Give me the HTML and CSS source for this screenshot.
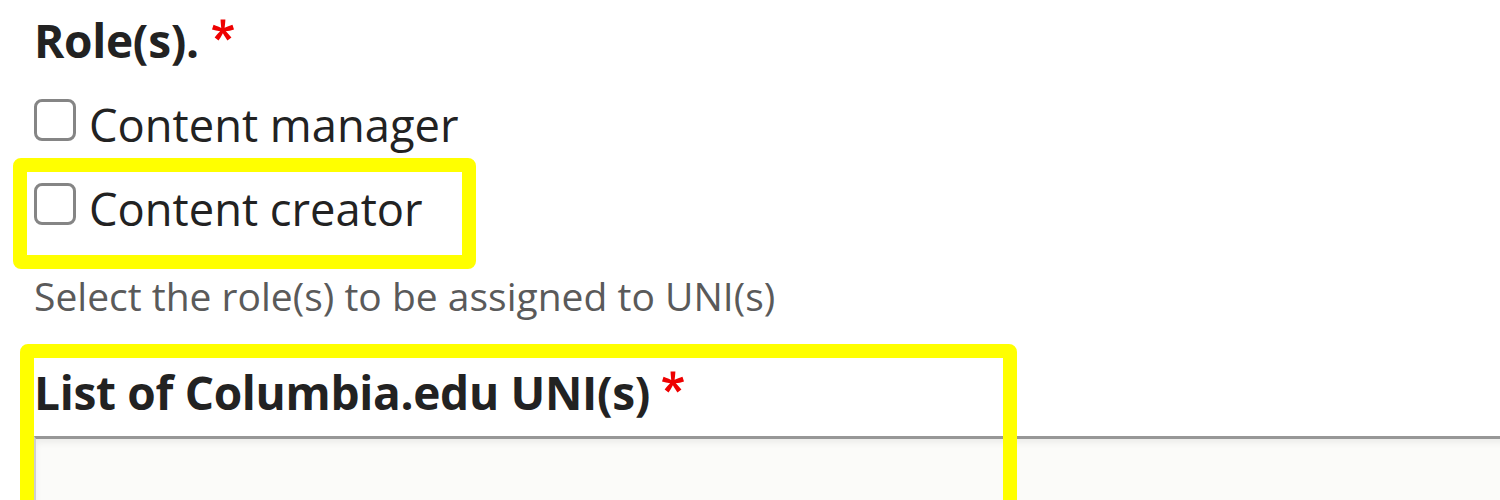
FILE: index.html
```html
<!DOCTYPE html>
<html lang="en">
  <head>
    <meta charset="UTF-8" />
    <title>Add roles</title>
    <link rel="stylesheet" href="styles.css">
  </head>
  <body>
    <form class="user-form">
      <div class="form-item roles">
        <div class="form-label">
          Role(s). <svg class="required" viewBox="0 0 16 16" aria-hidden="true">
            <path d="M0,7.562l1.114-3.438c2.565,0.906,4.43,1.688,5.59,2.35C6.398,3.553,6.237,1.544,6.22,0.447h3.511c-0.05,1.597-0.234,3.6-0.558,6.003c1.664-0.838,3.566-1.613,5.714-2.325L16,7.562c-2.05,0.678-4.06,1.131-6.028,1.356c0.984,0.856,2.372,2.381,4.166,4.575l-2.906,2.059c-0.935-1.274-2.041-3.009-3.316-5.206c-1.194,2.275-2.244,4.013-3.147,5.206l-2.856-2.059c1.872-2.307,3.211-3.832,4.017-4.575C3.849,8.516,1.872,8.062,0,7.562"/>
          </svg>
        </div>
        <label class="option">
          <input type="checkbox" name="roles" value="content_manager" />
          <span>Content manager</span>
        </label>
        <label class="option highlight">
          <input type="checkbox" name="roles" value="content_creator" />
          <span>Content creator</span>
        </label>
        <div class="description">Select the role(s) to be assigned to UNI(s)</div>
      </div>

      <div class="form-item unis">
        <label class="form-label" for="uni-list">
          List of Columbia.edu UNI(s) <svg class="required" viewBox="0 0 16 16" aria-hidden="true">
            <path d="M0,7.562l1.114-3.438c2.565,0.906,4.43,1.688,5.59,2.35C6.398,3.553,6.237,1.544,6.22,0.447h3.511c-0.05,1.597-0.234,3.6-0.558,6.003c1.664-0.838,3.566-1.613,5.714-2.325L16,7.562c-2.05,0.678-4.06,1.131-6.028,1.356c0.984,0.856,2.372,2.381,4.166,4.575l-2.906,2.059c-0.935-1.274-2.041-3.009-3.316-5.206c-1.194,2.275-2.244,4.013-3.147,5.206l-2.856-2.059c1.872-2.307,3.211-3.832,4.017-4.575C3.849,8.516,1.872,8.062,0,7.562"/>
          </svg>
        </label>
        <textarea id="uni-list" rows="5"></textarea>
        <div class="annotation"></div>
      </div>
    </form>
  </body>
</html>
```

FILE: styles.css
```css
html,
body {
  overflow: hidden;
}
body {
  font-family: "Open Sans", "DejaVu Sans", sans-serif;
  background-color: white;
  margin: 0;
  padding: 0 0 0 34px;
  color: #222;
}
.form-label {
  display: block;
  font-size: 46px;
  font-weight: 700;
  line-height: 56px;
  height: 56px;
  letter-spacing: -0.3px;
  color: #222;
}
.required {
  width: 22px;
  height: 22px;
  margin-left: 2px;
  vertical-align: 17px;
  fill: #ee0000;
}
.unis .required {
  margin-left: 0;
}
.roles {
  padding-top: 12px;
}
.option {
  position: relative;
  display: flex;
  align-items: flex-start;
  gap: 13px;
  font-size: 45.3px;
  line-height: 56px;
  height: 56px;
  margin-top: 28px;
  width: fit-content;
}
.roles .form-label + .option {
  margin-top: 29px;
}
.option input {
  appearance: none;
  -webkit-appearance: none;
  width: 42px;
  height: 42px;
  margin: 2px 0 0 0;
  border: 3px solid #858585;
  border-radius: 8px;
  background: white;
  box-sizing: border-box;
  flex-shrink: 0;
}
.highlight::after {
  content: "";
  position: absolute;
  left: -21px;
  top: -23px;
  width: 463px;
  height: 111px;
  border: 14px solid #ffff00;
  border-radius: 8px;
  box-sizing: border-box;
  pointer-events: none;
}
.description {
  font-size: 39px;
  line-height: 46px;
  margin-top: 36px;
  color: #5a5a5a;
}
.unis {
  position: relative;
  margin-top: 45px;
}
.unis textarea {
  display: block;
  margin-top: 16px;
  width: calc(100vw + 20px);
  height: 200px;
  box-sizing: border-box;
  background-color: #fbfbf9;
  border: 2px solid #cfcfcf;
  border-top: 3px solid #979797;
  box-shadow: inset 0 4px 6px rgba(0, 0, 0, 0.06);
  resize: none;
  font: inherit;
}
.annotation {
  position: absolute;
  left: -14px;
  top: -20px;
  width: 997px;
  height: 300px;
  border: 14px solid #ffff00;
  border-radius: 8px;
  box-sizing: border-box;
  pointer-events: none;
}
```
